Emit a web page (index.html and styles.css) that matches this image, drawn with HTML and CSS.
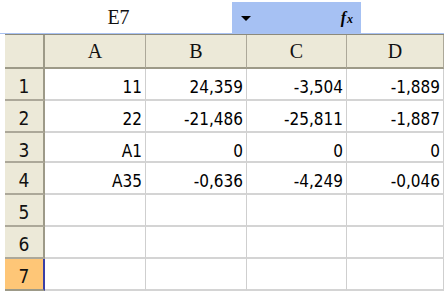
FILE: index.html
```html
<!DOCTYPE html>
<html>
<head>
<meta charset="utf-8">
<link rel="stylesheet" href="styles.css">
</head>
<body>
<div class="fbar">
  <div class="namebox">E7</div>
  <div class="fxbox">
    <span class="tri"></span>
    <span class="fx"><i>f</i><i class="x">x</i></span>
  </div>
</div>
<div class="sheet">
  <div class="corner"></div>
  <div class="ch">A</div><div class="ch">B</div><div class="ch">C</div><div class="ch">D</div>

  <div class="rh">1</div><div class="c">11</div><div class="c">24,359</div><div class="c">-3,504</div><div class="c">-1,889</div>
  <div class="rh">2</div><div class="c">22</div><div class="c">-21,486</div><div class="c">-25,811</div><div class="c">-1,887</div>
  <div class="rh">3</div><div class="c">A1</div><div class="c">0</div><div class="c">0</div><div class="c">0</div>
  <div class="rh">4</div><div class="c">A35</div><div class="c">-0,636</div><div class="c">-4,249</div><div class="c">-0,046</div>
  <div class="rh">5</div><div class="c"></div><div class="c"></div><div class="c"></div><div class="c"></div>
  <div class="rh">6</div><div class="c"></div><div class="c"></div><div class="c"></div><div class="c"></div>
  <div class="rh sel">7</div><div class="c"></div><div class="c"></div><div class="c"></div><div class="c"></div>
</div>
</body>
</html>
```

FILE: styles.css
```css
html, body {
  margin: 0;
  padding: 0;
  background: #ffffff;
}
body {
  width: 444px;
  height: 293px;
  overflow: hidden;
  font-family: "DejaVu Sans Condensed", "DejaVu Sans", sans-serif;
}
.fbar {
  display: flex;
  height: 34px;
  padding-left: 5px;
  border-bottom: 1px solid #a9c2f2;
  box-sizing: border-box;
}
.namebox {
  width: 227px;
  text-align: center;
  font-family: "Liberation Serif", serif;
  font-size: 20px;
  line-height: 34px;
  color: #111;
}
.fxbox {
  margin-top: 2px;
  width: 129px;
  background: #a6c1f3;
  display: flex;
  align-items: center;
  justify-content: space-between;
  padding: 0 8px 0 9px;
  box-sizing: border-box;
}
.tri {
  width: 0;
  height: 0;
  border-left: 5px solid transparent;
  border-right: 5px solid transparent;
  border-top: 5px solid #000;
  margin-top: 1px;
}
.fx {
  font-family: "Liberation Serif", serif;
  font-size: 16px;
  font-weight: bold;
  color: #000;
}
.fx .x {
  font-size: 12px;
  margin-left: 1px;
}
.sheet {
  display: grid;
  grid-template-columns: 40px 101px 101px 100px 97px;
  grid-template-rows: 34px 32px 32px 30px 32px 32px 32px 32px;
  margin-left: 5px;
  border-top: 1px solid #8c8a7c;
}
.corner, .ch {
  background: #ece9d8;
  border-right: 1px solid #aca899;
  border-bottom: 2px solid #9d9a88;
}
.corner {
  border-right: 2px solid #9d9a88;
}
.ch {
  font-family: "Liberation Serif", serif;
  font-size: 20px;
  text-align: center;
  line-height: 33px;
  color: #111;
}
.rh {
  background: #ece9d8;
  border-right: 2px solid #9d9a88;
  border-bottom: 2px solid #aca899;
  text-align: center;
  font-size: 19px;
  line-height: 31px;
  padding-top: 2px;
  box-sizing: border-box;
  color: #111;
}
.rh.sel {
  background: #fec677;
  border-right: 2px solid #3a3fa6;
  border-bottom: 2px solid #9d9a88;
}
.c {
  border-right: 1px solid #cfcfcf;
  border-bottom: 2px solid #d4d4d4;
  text-align: right;
  padding: 4px 3px 0 0;
  box-sizing: border-box;
  font-size: 17px;
  line-height: 28px;
  color: #000;
}
```
